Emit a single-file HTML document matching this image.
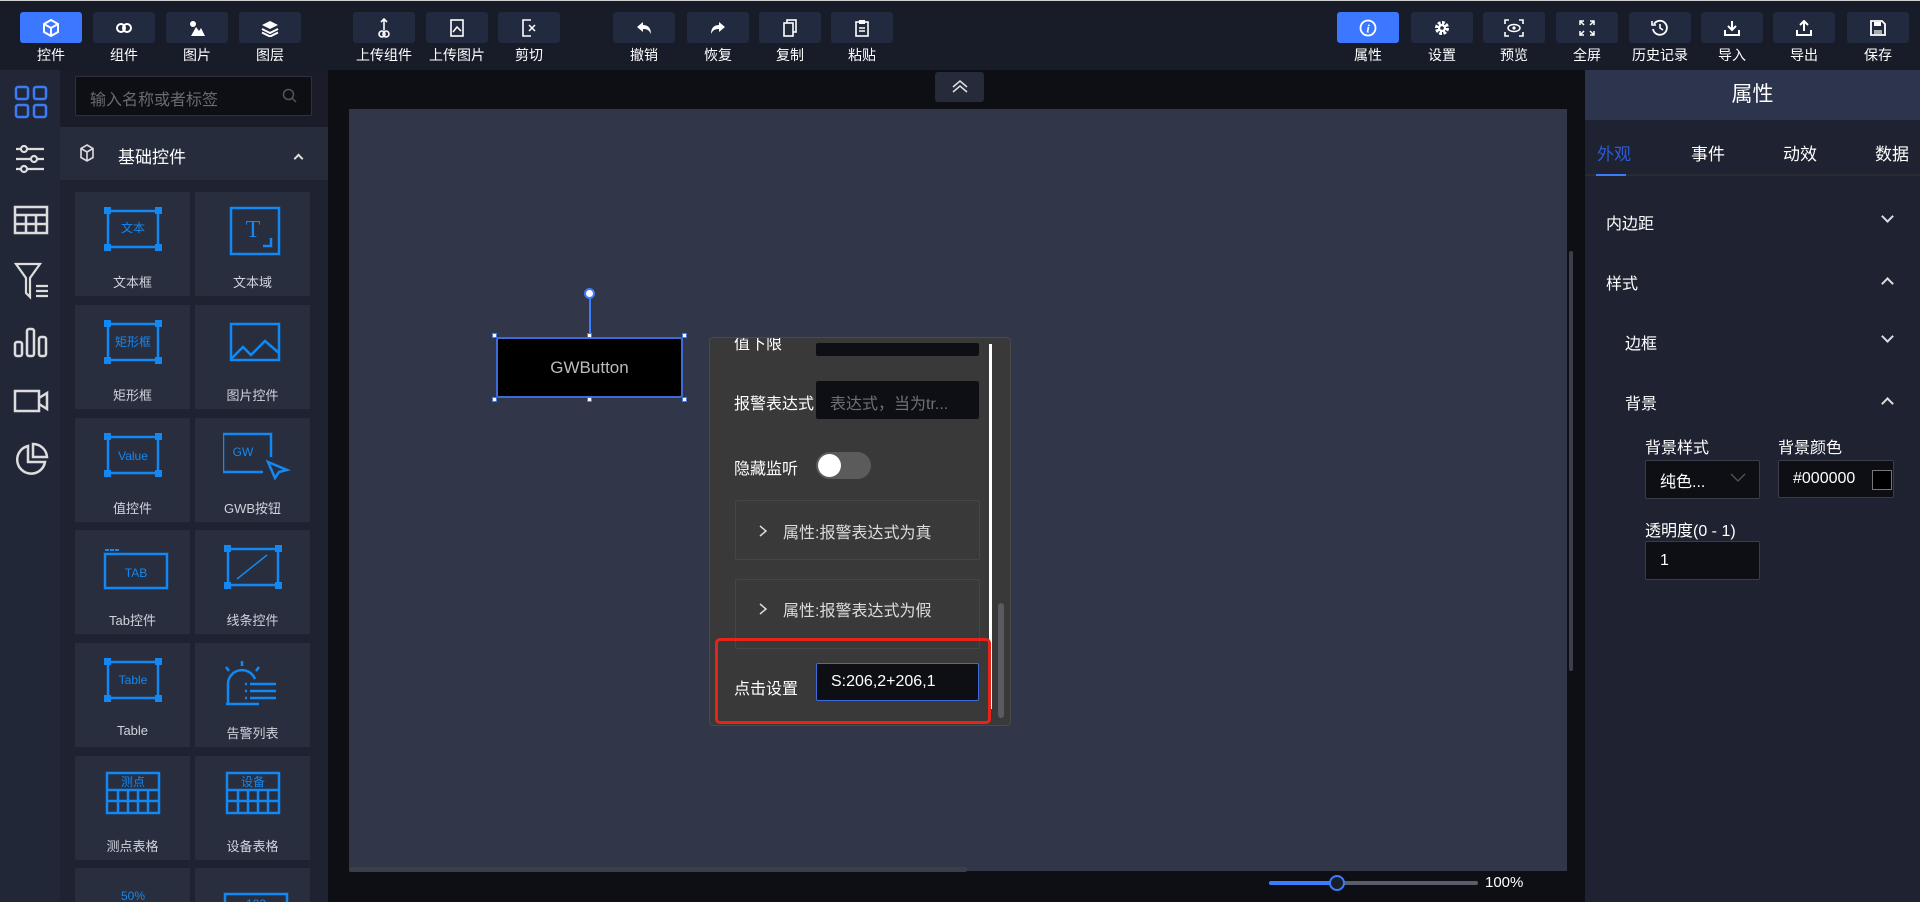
<!DOCTYPE html>
<html><head><meta charset="utf-8"><style>
*{box-sizing:border-box;margin:0;padding:0}
html{width:1920px;height:902px;overflow:hidden}
body{width:1920px;height:902px;overflow:hidden;background:#0d0f15;font-family:"Liberation Sans","Noto Sans CJK SC",sans-serif;color:#e6e8ee;position:relative}
.a{position:absolute}
#top{left:0;top:0;width:1920px;height:70px;background:#181c29;border-top:1px solid #d0d0d0}
.tb{position:absolute;top:11px;width:62px;height:31px;background:#212a3f;border-radius:3px;display:flex;align-items:center;justify-content:center}
.tb.on{background:#3b78ff}
.tl{position:absolute;top:44px;width:62px;text-align:center;font-size:14px;color:#fff;white-space:nowrap}
.tl.w{left:-6px;width:74px}
svg{display:block}
#lbar{left:0;top:70px;width:60px;height:832px;background:#222738}
#lpan{left:60px;top:70px;width:268px;height:832px;background:#1e2231;overflow:hidden}
.card{position:absolute;width:115px;height:104px;background:#282e3e;overflow:hidden}
.card .lb{position:absolute;top:80px;width:100%;text-align:center;font-size:13px;color:#cfd3dc}
.card svg{position:absolute;left:28px;top:14px}
.bl{stroke:#1388f2;fill:none;stroke-width:2.5}
.bt{fill:#1388f2;font-size:12px;font-family:"Liberation Sans","Noto Sans CJK SC",sans-serif}
#rp{left:1585px;top:70px;width:335px;height:832px;background:#1e2231}
.rt{position:absolute;font-size:16px;color:#fff}
.inp{position:absolute;background:#0e0f14;border:1px solid #3a3d48;border-radius:2px;font-size:16px;color:#fff;padding-left:14px;display:flex;align-items:center}
.chev{position:absolute;width:9px;height:9px;border-right:2px solid #ddd;border-bottom:2px solid #ddd}
</style></head><body>
<div id="top" class="a">
<div class="tb on" style="left:20px"><svg width="18" height="20" viewBox="0 0 18 20"><path d="M9 2 L16 6 V14 L9 18 L2 14 V6 Z M2 6 L9 10 L16 6 M9 10 V18" fill="none" stroke="#fff" stroke-width="2"/></svg></div><div class="tl" style="left:20px">控件</div>
<div class="tb" style="left:93px"><svg width="18" height="12"><circle cx="6" cy="6" r="4" fill="none" stroke="#fff" stroke-width="2"/><circle cx="12" cy="6" r="4" fill="none" stroke="#fff" stroke-width="2"/></svg></div><div class="tl" style="left:93px">组件</div>
<div class="tb" style="left:166px"><svg width="16" height="16"><circle cx="4" cy="4" r="3" fill="#fff"/><path d="M2 16 L7 7 L10 11 L12 8 L16 16Z" fill="#fff"/></svg></div><div class="tl" style="left:166px">图片</div>
<div class="tb" style="left:239px"><svg width="18" height="18"><path d="M9 2 L17 6 L9 10 L1 6Z" fill="#fff"/><path d="M1 10 L9 14 L17 10 M1 13.5 L9 17.5 L17 13.5" fill="none" stroke="#fff" stroke-width="2"/></svg></div><div class="tl" style="left:239px">图层</div>
<div class="tb" style="left:353px"><svg width="12" height="20"><path d="M6 1 V12 M3 4 L6 1 L9 4" stroke="#fff" stroke-width="1.6" fill="none"/><circle cx="4" cy="16" r="3" fill="none" stroke="#fff" stroke-width="1.6"/><circle cx="8" cy="16" r="3" fill="none" stroke="#fff" stroke-width="1.6"/></svg></div><div class="tl w" style="left:347px">上传组件</div>
<div class="tb" style="left:426px"><svg width="14" height="18"><rect x="1" y="1" width="12" height="16" fill="none" stroke="#fff" stroke-width="1.6"/><path d="M3 13 L7 8 L11 12" stroke="#fff" fill="none" stroke-width="1.5"/></svg></div><div class="tl w" style="left:420px">上传图片</div>
<div class="tb" style="left:498px"><svg width="14" height="18"><path d="M9 1 H1 V17 H9" fill="none" stroke="#fff" stroke-width="1.6"/><path d="M7 6 L13 12 M13 6 L7 12" stroke="#fff" stroke-width="1.5"/></svg></div><div class="tl" style="left:498px">剪切</div>
<div class="tb" style="left:613px"><svg width="16" height="14"><path d="M1 6 L7 1 V4 C12 4 15 7 15 13 C13 9 11 8 7 8 V11Z" fill="#fff"/></svg></div><div class="tl" style="left:613px">撤销</div>
<div class="tb" style="left:687px"><svg width="16" height="14"><path d="M15 6 L9 1 V4 C4 4 1 7 1 13 C3 9 5 8 9 8 V11Z" fill="#fff"/></svg></div><div class="tl" style="left:687px">恢复</div>
<div class="tb" style="left:759px"><svg width="14" height="18"><rect x="4" y="1" width="9" height="12" fill="none" stroke="#fff" stroke-width="1.6"/><rect x="1" y="4" width="9" height="13" fill="#212a3f" stroke="#fff" stroke-width="1.6"/></svg></div><div class="tl" style="left:759px">复制</div>
<div class="tb" style="left:831px"><svg width="14" height="18"><rect x="1" y="3" width="12" height="14" fill="none" stroke="#fff" stroke-width="1.6"/><rect x="4" y="1" width="6" height="4" fill="#fff"/><path d="M4 9 H10 M4 12 H10" stroke="#fff" stroke-width="1.4"/></svg></div><div class="tl" style="left:831px">粘贴</div>

<div class="tb on" style="left:1337px"><svg width="18" height="18"><circle cx="9" cy="9" r="7.5" fill="none" stroke="#fff" stroke-width="1.8"/><text x="9" y="13.5" text-anchor="middle" fill="#fff" font-size="12" font-weight="bold" font-style="italic" font-family="Liberation Serif">i</text></svg></div><div class="tl" style="left:1337px">属性</div>
<div class="tb" style="left:1411px"><svg width="16" height="16"><circle cx="8" cy="8" r="5" fill="none" stroke="#fff" stroke-width="4" stroke-dasharray="2.6 1.3"/><circle cx="8" cy="8" r="4" fill="#fff"/><circle cx="8" cy="8" r="1.8" fill="#212a3f"/></svg></div><div class="tl" style="left:1411px">设置</div>
<div class="tb" style="left:1483px"><svg width="20" height="18"><path d="M1 5 V1 H5 M15 1 H19 V5 M19 13 V17 H15 M5 17 H1 V13" fill="none" stroke="#fff" stroke-width="1.6"/><ellipse cx="10" cy="9" rx="6" ry="3.5" fill="none" stroke="#fff" stroke-width="1.5"/><circle cx="10" cy="9" r="1.6" fill="#fff"/></svg></div><div class="tl" style="left:1483px">预览</div>
<div class="tb" style="left:1556px"><svg width="16" height="16"><path d="M1 5 V1 H5 M1 1 L5 5 M11 1 H15 V5 M15 1 L11 5 M15 11 V15 H11 M15 15 L11 11 M5 15 H1 V11 M1 15 L5 11" fill="none" stroke="#fff" stroke-width="1.5"/></svg></div><div class="tl" style="left:1556px">全屏</div>
<div class="tb" style="left:1629px"><svg width="18" height="18"><path d="M3 5 A7 7 0 1 1 2 10" fill="none" stroke="#fff" stroke-width="1.8"/><path d="M1 2 V6 H5" fill="none" stroke="#fff" stroke-width="1.6"/><path d="M9 5 V9 L12 11" fill="none" stroke="#fff" stroke-width="1.6"/></svg></div><div class="tl w" style="left:1623px">历史记录</div>
<div class="tb" style="left:1701px"><svg width="16" height="16"><path d="M8 1 V10 M4 6 L8 10 L12 6" fill="none" stroke="#fff" stroke-width="2"/><path d="M1 10 V15 H15 V10" fill="none" stroke="#fff" stroke-width="2"/></svg></div><div class="tl" style="left:1701px">导入</div>
<div class="tb" style="left:1773px"><svg width="16" height="16"><path d="M8 11 V2 M4 5 L8 1 L12 5" fill="none" stroke="#fff" stroke-width="2"/><path d="M1 10 V15 H15 V10" fill="none" stroke="#fff" stroke-width="2"/></svg></div><div class="tl" style="left:1773px">导出</div>
<div class="tb" style="left:1847px"><svg width="16" height="16"><path d="M1 1 H12 L15 4 V15 H1 Z" fill="none" stroke="#fff" stroke-width="1.8"/><rect x="4" y="2" width="7" height="4" fill="#fff"/><rect x="4" y="10" width="8" height="4" fill="#aaa"/></svg></div><div class="tl" style="left:1847px">保存</div>
</div>

<div id="lbar" class="a">
<svg class="a" style="left:14px;top:15px" width="34" height="34"><g fill="none" stroke="#3c7bf5" stroke-width="2.5"><rect x="2" y="2" width="12" height="12" rx="2"/><rect x="20" y="2" width="12" height="12" rx="2"/><rect x="2" y="20" width="12" height="12" rx="2"/><rect x="20" y="20" width="12" height="12" rx="2"/></g></svg>
<svg class="a" style="left:14px;top:73px" width="32" height="32"><g stroke="#ddd" stroke-width="2.2" fill="#222738"><path d="M2 6 H30 M2 16 H30 M2 26 H30"/><circle cx="10" cy="6" r="3"/><circle cx="20" cy="16" r="3"/><circle cx="10" cy="26" r="3"/></g></svg>
<svg class="a" style="left:13px;top:135px" width="36" height="30"><g fill="none" stroke="#ddd" stroke-width="2.5"><rect x="2" y="2" width="32" height="26"/><path d="M2 10 H34 M2 19 H34 M13 10 V28 M23 10 V28"/></g></svg>
<svg class="a" style="left:14px;top:192px" width="36" height="38"><g fill="none" stroke="#ddd" stroke-width="2.2"><path d="M2 2 H26 L16 16 V35 L12 31 V16 Z"/><path d="M22 24 H34 M22 29 H34 M22 34 H34"/></g></svg>
<svg class="a" style="left:13px;top:256px" width="36" height="32"><g fill="none" stroke="#ddd" stroke-width="2.5"><rect x="2" y="16" width="7" height="14" rx="2"/><rect x="14" y="3" width="7" height="27" rx="2"/><rect x="26" y="11" width="7" height="19" rx="2"/></g></svg>
<svg class="a" style="left:13px;top:318px" width="36" height="26"><g fill="none" stroke="#ddd" stroke-width="2.5"><rect x="2" y="3" width="24" height="20"/><path d="M26 10 L34 5 V21 L26 16"/></g></svg>
<svg class="a" style="left:13px;top:372px" width="36" height="36"><g fill="none" stroke="#ddd" stroke-width="2.5"><path d="M15 4 A14 14 0 1 0 32 20 H15 Z"/><path d="M20 2 A14 14 0 0 1 34 15 H20 Z"/></g></svg>
</div>

<div id="lpan" class="a">
<div class="a" style="left:0;top:0;width:268px;height:57px;background:#1a1d29"></div>
<div class="a" style="left:15px;top:6px;width:237px;height:40px;background:#0e0f14;border:1px solid #2f323c;border-radius:2px;font-size:16px;color:#666b75;padding:9px 14px">输入名称或者标签</div>
<svg class="a" style="left:222px;top:18px" width="16" height="16"><circle cx="6.5" cy="6.5" r="5" fill="none" stroke="#555" stroke-width="1.5"/><path d="M10 10 L14 14" stroke="#555" stroke-width="1.5"/></svg>
<div class="a" style="left:0;top:57px;width:268px;height:53px;background:#272c3c"></div>
<svg class="a" style="left:20px;top:74px" width="14" height="18"><path d="M7 1 L13 4.5 V13.5 L7 17 L1 13.5 V4.5 Z M1 4.5 L7 8 L13 4.5 M7 8 V17" fill="none" stroke="#ddd" stroke-width="1.6"/></svg>
<div class="a" style="left:58px;top:73px;font-size:17px;color:#fff">基础控件</div>
<div class="chev" style="left:235px;top:85px;transform:rotate(-135deg);width:7px;height:7px"></div>
<div class="a" style="left:268px;top:0;width:7px;height:832px;background:#1a1d27"></div>
<div class="a" style="left:269px;top:0;width:5px;height:128px;background:#3b3e48;border-radius:3px"></div>

<div class="card" style="left:15px;top:122px"><svg width="60" height="46"><path class="bl" d="M5 5 H55 V41 H5 Z"/><g fill="#1388f2"><rect x="1" y="1" width="7" height="7"/><rect x="52" y="1" width="7" height="7"/><rect x="1" y="38" width="7" height="7"/><rect x="52" y="38" width="7" height="7"/></g><text class="bt" x="30" y="26" text-anchor="middle">文本</text></svg><div class="lb">文本框</div></div>
<div class="card" style="left:135px;top:122px"><svg width="60" height="50"><rect class="bl" x="8" y="2" width="48" height="46"/><text x="30" y="31" text-anchor="middle" fill="#1388f2" font-size="24" font-family="Liberation Serif">T</text><path class="bl" d="M40 40 H48 V32"/></svg><div class="lb">文本域</div></div>
<div class="card" style="left:15px;top:235px"><svg width="60" height="46"><path class="bl" d="M5 5 H55 V41 H5 Z"/><g fill="#1388f2"><rect x="1" y="1" width="7" height="7"/><rect x="52" y="1" width="7" height="7"/><rect x="1" y="38" width="7" height="7"/><rect x="52" y="38" width="7" height="7"/></g><text class="bt" x="30" y="27" text-anchor="middle">矩形框</text></svg><div class="lb">矩形框</div></div>
<div class="card" style="left:135px;top:235px"><svg width="60" height="46"><rect class="bl" x="8" y="5" width="48" height="36"/><path class="bl" d="M8 40 L20 28 L28 36 L42 22 L56 34"/></svg><div class="lb">图片控件</div></div>
<div class="card" style="left:15px;top:348px"><svg width="60" height="46"><path class="bl" d="M5 5 H55 V41 H5 Z"/><g fill="#1388f2"><rect x="1" y="1" width="7" height="7"/><rect x="52" y="1" width="7" height="7"/><rect x="1" y="38" width="7" height="7"/><rect x="52" y="38" width="7" height="7"/></g><text class="bt" x="30" y="28" text-anchor="middle" font-size="15">Value</text></svg><div class="lb">值控件</div></div>
<div class="card" style="left:135px;top:348px"><svg width="70" height="50"><path class="bl" d="M48 25 V2 H0 V40 H40"/><text class="bt" x="20" y="24" text-anchor="middle" font-size="14">GW</text><path class="bl" d="M45 30 L64 38 L56 40 L52 46 Z"/></svg><div class="lb">GWB按钮</div></div>
<div class="card" style="left:15px;top:460px"><svg width="66" height="46"><rect class="bl" x="2" y="10" width="62" height="34"/><path d="M2 6 H16" stroke="#1388f2" stroke-width="2" stroke-dasharray="4 1"/><text class="bt" x="33" y="33" text-anchor="middle" font-size="15">TAB</text></svg><div class="lb">Tab控件</div></div>
<div class="card" style="left:135px;top:460px"><svg width="60" height="46"><path class="bl" d="M5 5 H55 V41 H5 Z"/><g fill="#1388f2"><rect x="1" y="1" width="7" height="7"/><rect x="52" y="1" width="7" height="7"/><rect x="1" y="38" width="7" height="7"/><rect x="52" y="38" width="7" height="7"/></g><path d="M14 35 L44 11" stroke="#1388f2" stroke-width="1.5"/></svg><div class="lb">线条控件</div></div>
<div class="card" style="left:15px;top:573px"><svg width="60" height="46"><path class="bl" d="M5 5 H55 V41 H5 Z"/><g fill="#1388f2"><rect x="1" y="1" width="7" height="7"/><rect x="52" y="1" width="7" height="7"/><rect x="1" y="38" width="7" height="7"/><rect x="52" y="38" width="7" height="7"/></g><text class="bt" x="30" y="27" text-anchor="middle" font-size="13">Table</text></svg><div class="lb">Table</div></div>
<div class="card" style="left:135px;top:573px"><svg width="60" height="50"><g class="bl"><path d="M5 46 V28 A14 14 0 0 1 32 22"/><path d="M3 47 H36 M19 4 V9 M3 10 L6 14 M36 10 L33 14"/><path d="M22 27 H53 M22 34 H53 M22 41 H53" stroke-dasharray="2 3 40"/></g></svg><div class="lb">告警列表</div></div>
<div class="card" style="left:15px;top:686px"><svg width="60" height="46"><rect class="bl" x="4" y="3" width="52" height="40"/><path class="bl" d="M4 20 H56 M4 31 H56 M15 20 V43 M25 20 V43 M35 20 V43 M45 20 V43" stroke-width="1.8"/><text class="bt" x="30" y="16" text-anchor="middle" font-size="12">测点</text></svg><div class="lb">测点表格</div></div>
<div class="card" style="left:135px;top:686px"><svg width="60" height="46"><rect class="bl" x="4" y="3" width="52" height="40"/><path class="bl" d="M4 20 H56 M4 31 H56 M15 20 V43 M25 20 V43 M35 20 V43 M45 20 V43" stroke-width="1.8"/><text class="bt" x="30" y="16" text-anchor="middle" font-size="12">设备</text></svg><div class="lb">设备表格</div></div>
<div class="card" style="left:15px;top:798px;height:34px"><svg width="60" height="20"><text class="bt" x="30" y="18" text-anchor="middle" font-size="15">50%</text></svg></div>
<div class="card" style="left:135px;top:798px;height:34px"><svg width="70" height="20"><path class="bl" d="M2 20 V12 H64 V20"/><text class="bt" x="33" y="26" text-anchor="middle" font-size="13">123</text></svg></div>
</div>

<!-- canvas -->
<div class="a" style="left:935px;top:72px;width:49px;height:30px;background:#252b3b;border-radius:3px"></div>
<svg class="a" style="left:951px;top:79px" width="18" height="14"><path d="M2 8 L9 2 L16 8 M2 13 L9 7 L16 13" fill="none" stroke="#ddd" stroke-width="1.6"/></svg>
<div class="a" style="left:349px;top:109px;width:1218px;height:762px;background:#313648"></div>
<div class="a" style="left:1569px;top:251px;width:4px;height:420px;background:#3b3f4b;border-radius:2px"></div>
<div class="a" style="left:349px;top:867px;width:618px;height:5px;background:#3b3f4b;border-radius:2px"></div>
<div class="a" style="left:1269px;top:881px;width:209px;height:4px;background:#5a5e6a;border-radius:2px"></div>
<div class="a" style="left:1269px;top:881px;width:68px;height:4px;background:#3d7bff;border-radius:2px"></div>
<div class="a" style="left:1329px;top:875px;width:16px;height:16px;border-radius:50%;background:#1a1e2a;border:2px solid #3d7bff"></div>
<div class="a" style="left:1485px;top:874px;font-size:15px;color:#fff">100%</div>

<!-- GWButton -->
<div class="a" style="left:589px;top:293px;width:2px;height:44px;background:#3d7bff"></div>
<div class="a" style="left:584px;top:288px;width:11px;height:11px;border-radius:50%;background:#fff;border:2px solid #3d7bff"></div>
<div class="a" style="left:496px;top:337px;width:187px;height:61px;background:#000;border:2px solid #3d6bdc;border-radius:3px;color:#bbb;font-size:17px;display:flex;align-items:center;justify-content:center">GWButton</div>
<div class="a" style="left:492px;top:333px;width:5px;height:5px;background:#fff;border:1px solid #3d7bff"></div>
<div class="a" style="left:587px;top:333px;width:5px;height:5px;background:#fff;border:1px solid #3d7bff"></div>
<div class="a" style="left:682px;top:333px;width:5px;height:5px;background:#fff;border:1px solid #3d7bff"></div>
<div class="a" style="left:492px;top:397px;width:5px;height:5px;background:#fff;border:1px solid #3d7bff"></div>
<div class="a" style="left:587px;top:397px;width:5px;height:5px;background:#fff;border:1px solid #3d7bff"></div>
<div class="a" style="left:682px;top:397px;width:5px;height:5px;background:#fff;border:1px solid #3d7bff"></div>

<!-- popup -->
<div class="a" style="left:709px;top:337px;width:302px;height:389px;background:#393939;border:1px solid #4a4a4a;border-radius:4px;overflow:hidden">
<div class="a" style="left:24px;top:-8px;font-size:16px;color:#fff">值下限</div>
<div class="a" style="left:106px;top:5px;width:163px;height:13px;background:#0e0f14;border-radius:2px"></div>
<div class="a" style="left:24px;top:52px;font-size:16px;color:#fff;width:84px;overflow:hidden;white-space:nowrap">报警表达式</div>
<div class="a" style="left:106px;top:43px;width:163px;height:38px;background:#0e0f14;border-radius:2px;font-size:16px;color:#6e7079;padding:9px 14px;white-space:nowrap">表达式，当为tr...</div>
<div class="a" style="left:24px;top:117px;font-size:16px;color:#fff">隐藏监听</div>
<div class="a" style="left:106px;top:114px;width:55px;height:27px;background:#5b5b5b;border-radius:14px"></div>
<div class="a" style="left:108px;top:116px;width:23px;height:23px;background:#fff;border-radius:50%"></div>
<div class="a" style="left:25px;top:162px;width:245px;height:60px;border:1px solid #464646;border-radius:2px"></div>
<svg class="a" style="left:48px;top:186px" width="10" height="14"><path d="M2 2 L8 7 L2 12" fill="none" stroke="#ddd" stroke-width="1.5"/></svg>
<div class="a" style="left:73px;top:181px;font-size:16px;color:#ddd">属性:报警表达式为真</div>
<div class="a" style="left:25px;top:241px;width:245px;height:70px;border:1px solid #464646;border-radius:2px"></div>
<svg class="a" style="left:48px;top:264px" width="10" height="14"><path d="M2 2 L8 7 L2 12" fill="none" stroke="#ddd" stroke-width="1.5"/></svg>
<div class="a" style="left:73px;top:259px;font-size:16px;color:#ddd">属性:报警表达式为假</div>
<div class="a" style="left:279px;top:6px;width:3px;height:365px;background:#fff"></div>
<div class="a" style="left:288px;top:265px;width:6px;height:115px;background:#5a5b60;border-radius:3px"></div>
<div class="a" style="left:5px;top:300px;width:276px;height:86px;border:3px solid #e8231a;border-radius:5px"></div>
<div class="a" style="left:24px;top:337px;font-size:16px;color:#fff">点击设置</div>
<div class="a" style="left:106px;top:325px;width:163px;height:38px;background:#0e0f14;border:1.5px solid #3d6bdc;border-radius:2px;font-size:16px;color:#fff;padding:9px 14px">S:206,2+206,1</div>
</div>

<!-- right panel -->
<div id="rp" class="a">
<div class="a" style="left:0;top:0;width:335px;height:50px;background:#2c354d;font-size:21px;color:#fff;text-align:center;line-height:50px">属性</div>
<div class="rt" style="left:12px;top:70px;font-size:17px;color:#2c5ad6">外观</div>
<div class="rt" style="left:106px;top:70px;font-size:17px">事件</div>
<div class="rt" style="left:198px;top:70px;font-size:17px">动效</div>
<div class="rt" style="left:290px;top:70px;font-size:17px">数据</div>
<div class="a" style="left:0;top:104px;width:335px;height:2px;background:#2a2c33"></div>
<div class="a" style="left:11px;top:104px;width:30px;height:2px;background:#3d7bff"></div>
<div class="rt" style="left:21px;top:140px">内边距</div><div class="chev" style="left:298px;top:142px;transform:rotate(45deg)"></div>
<div class="rt" style="left:21px;top:200px">样式</div><div class="chev" style="left:298px;top:209px;transform:rotate(-135deg)"></div>
<div class="rt" style="left:40px;top:260px">边框</div><div class="chev" style="left:298px;top:262px;transform:rotate(45deg)"></div>
<div class="rt" style="left:40px;top:320px">背景</div><div class="chev" style="left:298px;top:329px;transform:rotate(-135deg)"></div>
<div class="rt" style="left:60px;top:364px">背景样式</div>
<div class="rt" style="left:193px;top:364px">背景颜色</div>
<div class="inp" style="left:60px;top:390px;width:115px;height:39px">纯色...</div>
<svg class="a" style="left:145px;top:403px" width="16" height="10"><path d="M1 1 L8 8 L15 1" fill="none" stroke="#555" stroke-width="1.3"/></svg>
<div class="inp" style="left:193px;top:390px;width:116px;height:38px">#000000</div>
<div class="a" style="left:287px;top:400px;width:20px;height:20px;background:#000;border:1px solid #777"></div>
<div class="rt" style="left:60px;top:447px">透明度(0 - 1)</div>
<div class="inp" style="left:60px;top:471px;width:115px;height:39px">1</div>
</div>
</body></html>
